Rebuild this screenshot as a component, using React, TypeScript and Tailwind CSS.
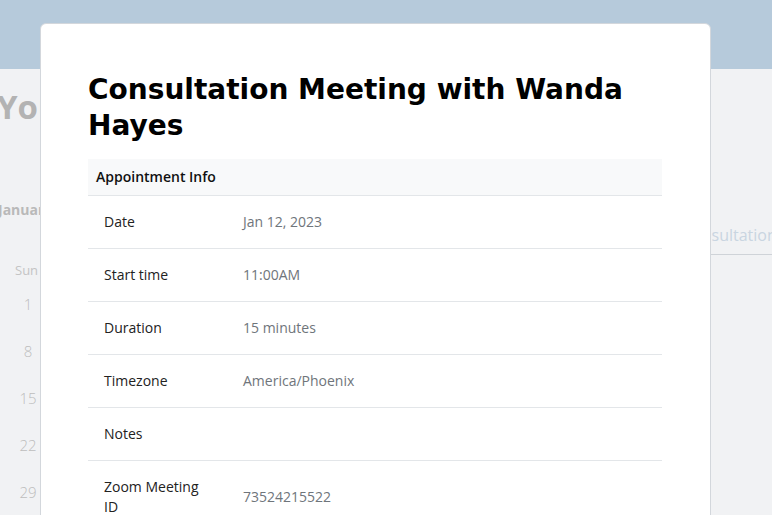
import React from "react";

const rows: { label: string; value: string }[] = [
  { label: "Date", value: "Jan 12, 2023" },
  { label: "Start time", value: "11:00AM" },
  { label: "Duration", value: "15 minutes" },
  { label: "Timezone", value: "America/Phoenix" },
  { label: "Notes", value: "" },
  { label: "Zoom Meeting ID", value: "73524215522" },
];

const days = ["1", "8", "15", "22", "29"];

export default function App() {
  return (
    <div
      className="relative h-[515px] w-[772px] overflow-hidden bg-[#f1f2f4]"
      style={{ fontFamily: "'Open Sans', 'Noto Sans', sans-serif" }}
    >
      {/* page header */}
      <div className="h-[69px] bg-[#b6cadb]" />

      {/* dimmed page behind the dialog */}
      <div className="flex">
        <div className="w-[60px] shrink-0">
          <div className="-ml-[3px] mt-[18px] text-[33px] font-bold leading-10 text-[#b3b3b3]">Your</div>
          <div className="-ml-[2px] mt-[73px] text-[14px] font-bold leading-5 text-[#b9b9b9]">January</div>
          <div className="ml-[15px] mt-[40px] text-[13px] leading-5 text-[#c4c4c4]">Sun</div>
          <div className="mt-px flex flex-col">
            {days.map((d) => (
              <div key={d} className="flex h-[47px] w-[56px] items-center justify-center text-[15px] font-light text-[#bdbdbd]">
                {d}
              </div>
            ))}
          </div>
        </div>
        <div className="flex-1" />
        <div className="w-[80px] shrink-0 pt-[154px]">
          <div className="-ml-[10px] whitespace-nowrap text-[16px] leading-6 text-[#c9d5e1]">Consultation</div>
          <div className="ml-[-10px] mt-[7px] h-px bg-[#cfd3d8]" />
        </div>
      </div>

      {/* dialog */}
      <div className="absolute left-[40px] top-[23px] h-[520px] w-[671px] rounded-t-md border border-[#d3d7dc] bg-white pl-[47px] pr-[48px] pt-[48px]">
        <h1
          className="text-[28px] font-bold leading-9 text-black"
          style={{ fontFamily: "'DejaVu Sans', sans-serif" }}
        >
          Consultation Meeting with Wanda Hayes
        </h1>
        <table className="mt-[15px] w-full border-collapse text-[14px] leading-5">
          <thead>
            <tr className="border-b border-[#e3e6e9] bg-[#f8f9fa]">
              <th colSpan={2} className="px-2 py-2 text-left font-semibold text-[#111]">
                Appointment Info
              </th>
            </tr>
          </thead>
          <tbody>
            {rows.map((r) => (
              <tr key={r.label} className="border-b border-[#e3e6e9]">
                <td className="w-[139px] px-4 py-4 align-middle text-[#222]">{r.label}</td>
                <td className="px-4 py-4 align-middle text-[#6f757b]">{r.value}</td>
              </tr>
            ))}
          </tbody>
        </table>
      </div>
    </div>
  );
}
